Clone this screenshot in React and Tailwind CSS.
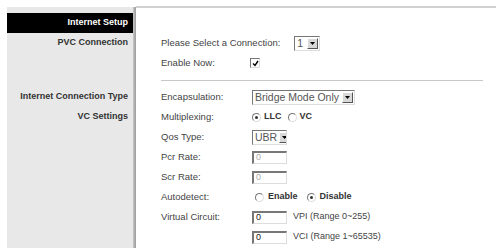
const font = { fontFamily: '"Liberation Sans", Arial, sans-serif' };

const Arrow = () => (
  <span className="flex h-[11px] w-[11px] shrink-0 items-center justify-center border border-t-white border-l-white border-r-[#555] border-b-[#555] bg-[#d8d8d8]">
    <svg width="5" height="3" viewBox="0 0 5 3">
      <path d="M0 0h5L2.5 3z" fill="#000" />
    </svg>
  </span>
);

const Select = ({ value, width, textClass = 'text-[10.5px]' }) => (
  <div
    className={`flex h-[15px] items-center justify-between gap-[2px] overflow-hidden border border-t-[#777] border-l-[#777] border-r-[#ddd] border-b-[#ddd] bg-white pl-[2px] pr-[1px] ${width}`}
  >
    <span className={`whitespace-nowrap leading-none text-[#555] ${textClass}`}>{value}</span>
    <Arrow />
  </div>
);

const TextBox = ({ value, dim, width = 'w-[35px]' }) => (
  <div
    className={`flex h-[13px] items-center border-t-2 border-l-2 border-r border-b border-t-[#777] border-l-[#777] border-r-[#ddd] border-b-[#ddd] bg-white pl-[2px] ${width}`}
  >
    <span className={`text-[9px] leading-none ${dim ? 'text-[#aaa]' : 'text-[#222]'}`}>{value}</span>
  </div>
);

const Radio = ({ checked }) => (
  <span className="relative inline-flex h-[9px] w-[9px] items-center justify-center rounded-full border border-t-[#777] border-l-[#777] border-r-[#ddd] border-b-[#ddd] bg-white">
    {checked && <span className="h-[3px] w-[3px] rounded-full bg-[#333]" />}
  </span>
);

const Row = ({ label, children }) => (
  <div className="grid h-[20px] grid-cols-[91px_1fr] items-center">
    <span className="whitespace-nowrap text-[9.5px] text-[#444]">{label}</span>
    <div className="flex items-center">{children}</div>
  </div>
);

export default function App() {
  return (
    <div className="flex h-[248px] w-[496px] overflow-hidden bg-white" style={font}>
      {/* left menu */}
      <div className="ml-[7px] mt-[7px] w-[126px] bg-[#e8e8e8] pt-[6px] text-right text-[9px] font-bold">
        <div className="flex h-[20px] items-center justify-end bg-black pr-[5px] text-white">Internet Setup</div>
        <div className="flex h-[20px] items-center justify-end pr-[5px] text-[#333]">PVC Connection</div>
        <div className="h-[34px]" />
        <div className="flex h-[20px] items-center justify-end whitespace-nowrap pr-[5px] text-[#333]">Internet Connection Type</div>
        <div className="flex h-[20px] items-center justify-end pr-[5px] text-[#333]">VC Settings</div>
      </div>
      <div className="mt-[7px] w-[3px] bg-gradient-to-r from-[#c8c8c8] to-[#9a9a9a]" />

      {/* content */}
      <div className="mt-[6px] flex-1 border-t-2 border-[#d0d0d0] pl-[25px] pt-[25px]">
        <div className="flex h-[20px] items-center gap-[14px]">
          <span className="text-[9.5px] text-[#444]">Please Select a Connection:</span>
          <Select value="1" width="w-[26px]" />
        </div>
        <Row label="Enable Now:">
          <span className="-ml-[2px] flex h-[10px] w-[10px] items-center justify-center border border-t-[#777] border-l-[#777] border-r-[#ddd] border-b-[#ddd] bg-white">
            <svg width="7" height="7" viewBox="0 0 7 7">
              <path d="M1 3.5l2 2 3-4.5" stroke="#000" strokeWidth="1.4" fill="none" />
            </svg>
          </span>
        </Row>
        <div className="flex h-[14px] items-center">
          <div className="h-px w-[322px] bg-[#c8c8c8]" />
        </div>
        <Row label="Encapsulation:">
          <Select value="Bridge Mode Only" width="w-[103px]" />
        </Row>
        <Row label="Multiplexing:">
          <div className="flex items-center gap-[3px] text-[9px] font-bold text-[#333]">
            <Radio checked />
            <span className="mr-[3px]">LLC</span>
            <Radio />
            <span>VC</span>
          </div>
        </Row>
        <Row label="Qos Type:">
          <Select value="UBR" width="w-[35px]" />
        </Row>
        <Row label="Pcr Rate:">
          <TextBox value="0" dim />
        </Row>
        <Row label="Scr Rate:">
          <TextBox value="0" dim />
        </Row>
        <Row label="Autodetect:">
          <div className="flex items-center gap-[4px] pl-[3px] text-[9px] font-bold text-[#333]">
            <Radio />
            <span className="mr-[5px]">Enable</span>
            <Radio checked />
            <span>Disable</span>
          </div>
        </Row>
        <Row label="Virtual Circuit:">
          <TextBox value="0" />
          <span className="ml-[6px] text-[9px] text-[#444]">VPI (Range 0~255)</span>
        </Row>
        <Row label="">
          <TextBox value="0" />
          <span className="ml-[6px] text-[9px] text-[#444]">VCI (Range 1~65535)</span>
        </Row>
      </div>
    </div>
  );
}
